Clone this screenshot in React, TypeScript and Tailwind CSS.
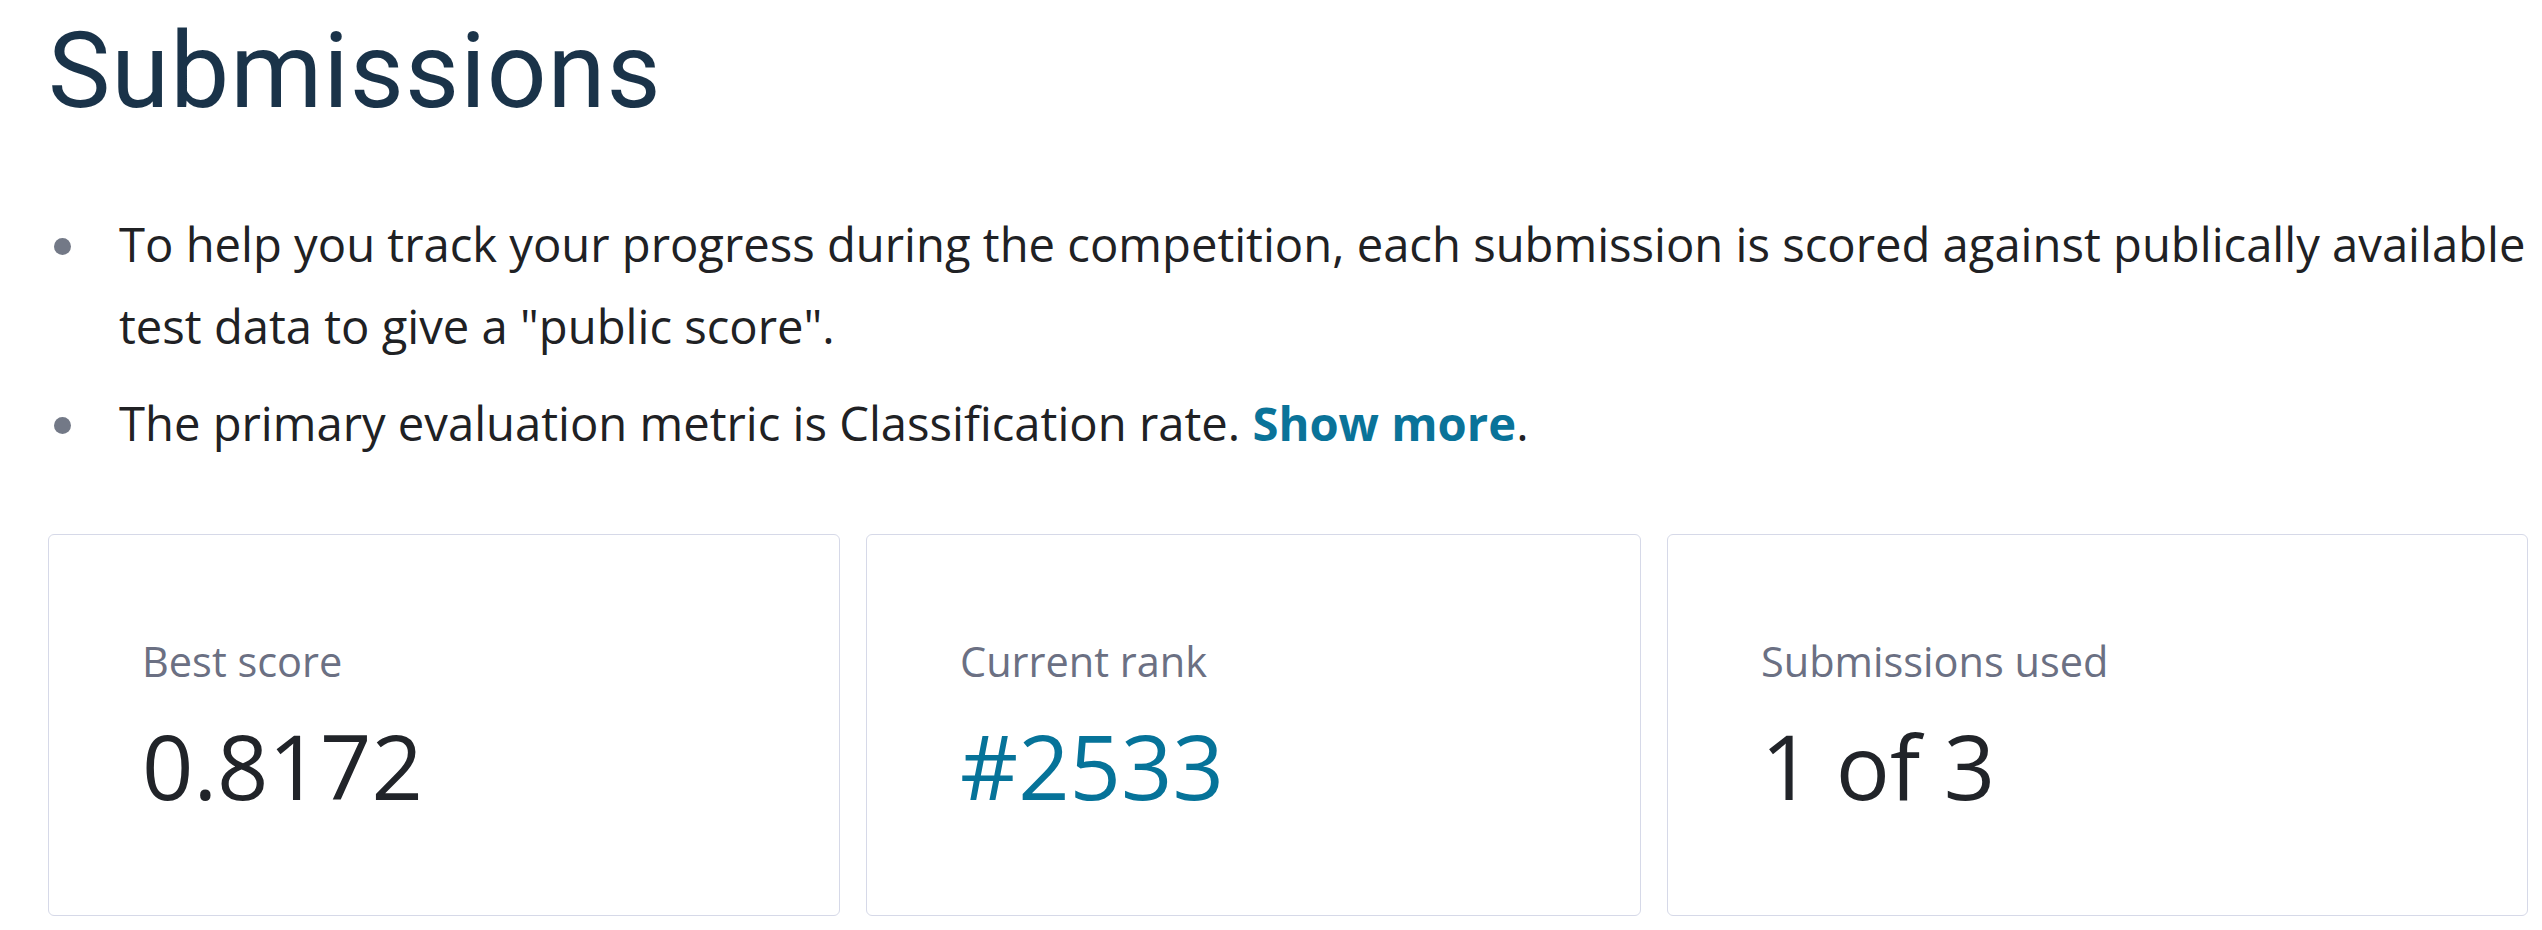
import React from 'react';

type Stat = { label: string; value: string; accent?: boolean; width: string };

const stats: Stat[] = [
  { label: 'Best score', value: '0.8172', width: 'w-[792px]' },
  { label: 'Current rank', value: '#2533', accent: true, width: 'w-[775px]' },
  { label: 'Submissions used', value: '1 of 3', width: 'w-[861px]' },
];

function Bullet({ children }: { children: React.ReactNode }) {
  return (
    <li className="flex">
      <div className="w-[65px] shrink-0">
        <span className="block w-[17px] h-[17px] mt-[35px] rounded-full bg-[#737987]"></span>
      </div>
      <div className="flex-1">{children}</div>
    </li>
  );
}

export default function App() {
  return (
    <div className="min-h-screen bg-white pt-[19px] pl-[48px] pr-[10px] font-['Open_Sans',sans-serif]">
      <h1 className="font-['Roboto',sans-serif] text-[105px] leading-none font-normal tracking-[1px] text-[#1a3349]">
        Submissions
      </h1>

      {/* Intro notes */}
      <ul className="mt-[79px] pl-[6px] text-[47.2px] leading-[82px] text-[#202124] flex flex-col gap-[15px]">
        <Bullet>
          <span className="whitespace-nowrap">
            To help you track your progress during the competition, each submission is scored against publically available
          </span>
          <br />
          test data to give a "public score".
        </Bullet>
        <Bullet>
          The primary evaluation metric is Classification rate.{' '}
          <a className="font-bold text-[#0a7399]">Show more</a>.
        </Bullet>
      </ul>

      {/* Stats */}
      <div className="mt-[70px] flex gap-[26px]">
        {stats.map((s) => (
          <div
            key={s.label}
            className={`${s.width} border border-[#d6d9e8] rounded-[6px] pl-[93px] pt-[96px] pb-[96px]`}
          >
            <div className="text-[41.5px] leading-[60px] text-[#6b7083]">{s.label}</div>
            <div
              className={`mt-[20px] text-[90px] leading-[108px] ${s.accent ? 'text-[#067399]' : 'text-[#212429]'}`}
            >
              {s.value}
            </div>
          </div>
        ))}
      </div>
    </div>
  );
}
